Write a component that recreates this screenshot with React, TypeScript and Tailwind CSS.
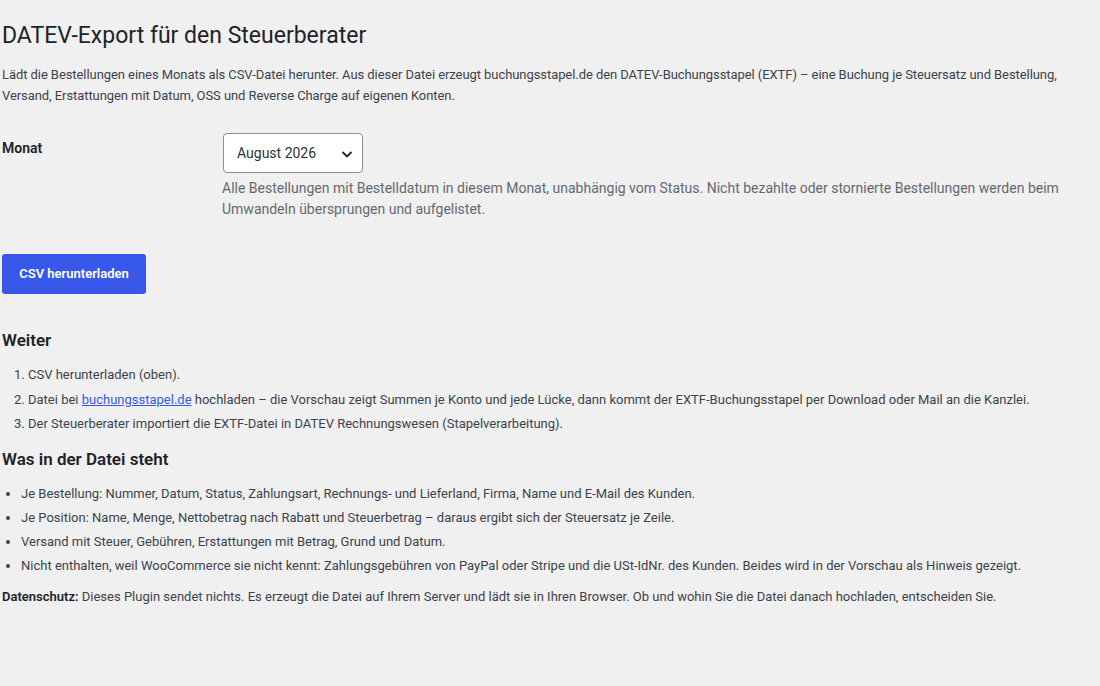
export default function App() {
  return (
    <div className="min-h-screen bg-[#f0f0f1] text-[#3c434a] text-[13px] leading-[1.4] font-['Roboto','Liberation_Sans',sans-serif]">
      <div className="pl-[2px] pr-[20px] pt-[10px]">
        <h1 className="text-[23px] font-normal leading-[30px] text-[#1d2327] pt-[11px] pb-[4px]">
          DATEV-Export für den Steuerberater
        </h1>
        <p className="mt-[9px] mb-[14px] leading-[21px] tracking-[-0.07px]">
          Lädt die Bestellungen eines Monats als CSV-Datei herunter. Aus dieser Datei erzeugt buchungsstapel.de den
          DATEV-Buchungsstapel (EXTF) – eine Buchung je Steuersatz und Bestellung, Versand, Erstattungen mit Datum, OSS
          und Reverse Charge auf eigenen Konten.
        </p>

        {/* form table */}
        <div className="mt-[6px] flex">
          <div className="w-[220px] shrink-0 pt-[19px] text-[14px] font-semibold leading-[1.3] text-[#1d2327]">
            Monat
          </div>
          <div className="pt-[13px] pb-[15px] text-[14px]">
            <div className="ml-[1px] flex h-[40px] w-[140px] items-center justify-between rounded-[4px] border border-[#8c8f94] bg-white pl-[13px] pr-[8px] pt-[1px] text-[#2c3338]">
              <span>August 2026</span>
              <svg width="14" height="14" viewBox="0 0 14 14" fill="none">
                <path d="M2.5 5 L7 9.5 L11.5 5" stroke="#1d2327" strokeWidth="1.8" />
              </svg>
            </div>
            <p className="mt-[5px] leading-[21px] text-[#646970]">
              Alle Bestellungen mit Bestelldatum in diesem Monat, unabhängig vom Status. Nicht bezahlte oder stornierte
              Bestellungen werden beim Umwandeln übersprungen und aufgelistet.
            </p>
          </div>
        </div>

        <div className="mt-[19px]">
          <button className="flex h-[40px] w-[144px] items-center justify-center rounded-[3px] bg-[#3858e9] text-[13px] font-semibold text-white">
            CSV herunterladen
          </button>
        </div>

        <h2 className="mt-[34px] text-[17px] font-semibold leading-[24px] text-[#1d2327]">Weiter</h2>
        <ol className="mt-[14px] ml-[26px] list-decimal leading-[18.5px]">
          <li className="mb-[6px]">CSV herunterladen (oben).</li>
          <li className="mb-[6px]">
            Datei bei{' '}
            <a href="#" className="text-[#3858e9] underline">
              buchungsstapel.de
            </a>{' '}
            hochladen – die Vorschau zeigt Summen je Konto und jede Lücke, dann kommt der EXTF-Buchungsstapel per
            Download oder Mail an die Kanzlei.
          </li>
          <li className="mb-[6px]">Der Steuerberater importiert die EXTF-Datei in DATEV Rechnungswesen (Stapelverarbeitung).</li>
        </ol>

        <h2 className="mt-[13px] text-[17px] font-semibold leading-[24px] text-[#1d2327]">Was in der Datei steht</h2>
        <ul className="mt-[14px] ml-[19px] list-disc leading-[18.2px]">
          <li className="mb-[6px]">
            Je Bestellung: Nummer, Datum, Status, Zahlungsart, Rechnungs- und Lieferland, Firma, Name und E-Mail des
            Kunden.
          </li>
          <li className="mb-[6px]">
            Je Position: Name, Menge, Nettobetrag nach Rabatt und Steuerbetrag – daraus ergibt sich der Steuersatz je
            Zeile.
          </li>
          <li className="mb-[6px]">Versand mit Steuer, Gebühren, Erstattungen mit Betrag, Grund und Datum.</li>
          <li className="mb-[6px]">
            Nicht enthalten, weil WooCommerce sie nicht kennt: Zahlungsgebühren von PayPal oder Stripe und die USt-IdNr.
            des Kunden. Beides wird in der Vorschau als Hinweis gezeigt.
          </li>
        </ul>

        <p className="mt-[12px] leading-[19.5px]">
          <strong className="font-semibold text-[#1d2327]">Datenschutz:</strong> Dieses Plugin sendet nichts. Es erzeugt
          die Datei auf Ihrem Server und lädt sie in Ihren Browser. Ob und wohin Sie die Datei danach hochladen,
          entscheiden Sie.
        </p>
      </div>
    </div>
  );
}
